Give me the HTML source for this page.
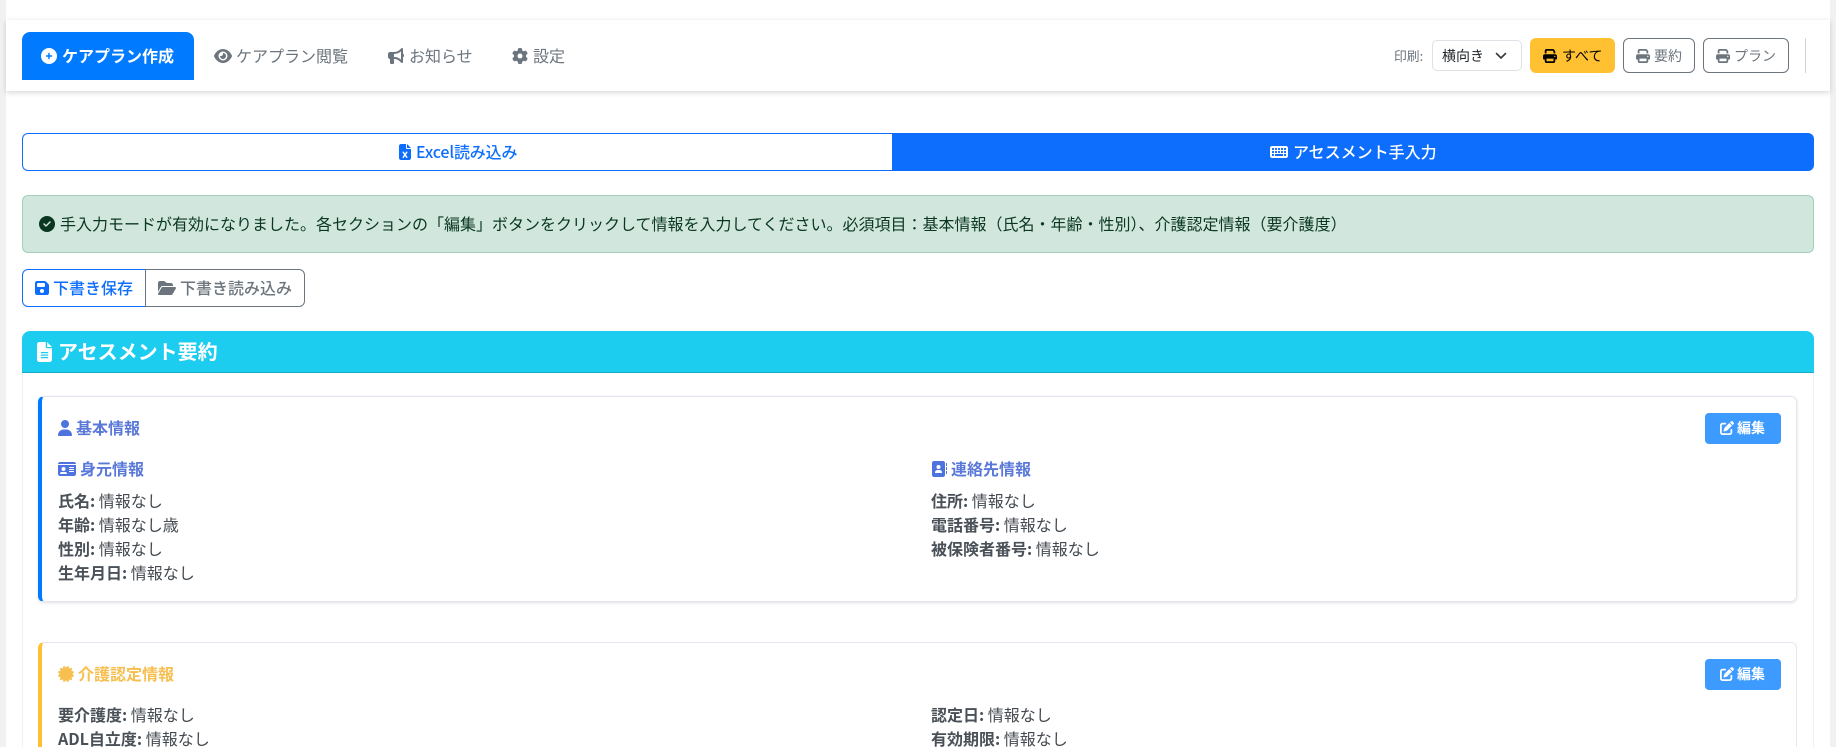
<!DOCTYPE html>
<html lang="ja"><head><meta charset="utf-8"><title>ケアプラン</title>
<style>
html,body{margin:0;padding:0;width:1836px;height:747px;overflow:hidden;background:#f0f1f3;}
body{font-family:"Noto Sans CJK JP","Liberation Sans",sans-serif;position:relative;color:#212529;}
#page{position:absolute;left:0;top:0;width:1836px;height:747px;overflow:hidden;}
#main{position:absolute;left:6px;top:0;width:1824px;height:747px;background:#fff;}
.a{position:absolute;box-sizing:border-box;}
.t{position:absolute;white-space:nowrap;line-height:24px;height:24px;font-size:16px;}
svg{position:absolute;fill:currentColor;display:block;}
b{font-weight:700;}
.row{color:#444a50;}
.row b{color:#495057;}
</style></head><body>
<svg width="0" height="0" style="position:absolute"><defs>
<symbol id="plus" viewBox="0 0 512 512"><path d="M256 512A256 256 0 1 0 256 0a256 256 0 1 0 0 512zM232 336V280H176c-13.3 0-24-10.7-24-24s10.7-24 24-24h56V176c0-13.3 10.7-24 24-24s24 10.7 24 24v56h56c13.3 0 24 10.7 24 24s-10.7 24-24 24H280v56c0 13.3-10.7 24-24 24s-24-10.7-24-24z"/></symbol>
<symbol id="eye" viewBox="0 0 576 512"><path d="M288 32c-80.8 0-145.5 36.8-192.6 80.6C48.6 156 17.3 208 2.5 243.7c-3.3 7.9-3.3 16.7 0 24.6C17.3 304 48.6 356 95.4 399.4C142.5 443.2 207.2 480 288 480s145.5-36.8 192.6-80.6c46.8-43.5 78.1-95.4 93-131.1c3.3-7.9 3.3-16.7 0-24.6c-14.9-35.7-46.2-87.7-93-131.1C433.5 68.8 368.8 32 288 32zM144 256a144 144 0 1 1 288 0 144 144 0 1 1 -288 0zm144-64c0 35.3-28.7 64-64 64c-7.1 0-13.9-1.2-20.3-3.3c-5.5-1.8-11.9 1.6-11.7 7.4c.3 6.9 1.3 13.8 3.2 20.7c13.7 51.2 66.4 81.6 117.6 67.9s81.6-66.4 67.9-117.6c-11.1-41.5-47.8-69.4-88.6-71.1c-5.8-.2-9.2 6.1-7.4 11.7c2.1 6.4 3.3 13.2 3.3 20.3z"/></symbol>
<symbol id="horn" viewBox="0 0 512 512"><path d="M480 32c0-12.9-7.8-24.6-19.8-29.6s-25.7-2.2-34.9 6.9L381.7 53c-48 48-113.1 75-181 75H192 160 64c-35.3 0-64 28.7-64 64v96c0 35.3 28.7 64 64 64l0 128c0 17.7 14.3 32 32 32h64c17.7 0 32-14.3 32-32V352l8.7 0c67.9 0 133 27 181 75l43.6 43.6c9.2 9.2 22.9 11.9 34.9 6.9s19.8-16.6 19.8-29.6V300.4c18.6-8.8 32-32.5 32-60.4s-13.4-51.6-32-60.4V32zm-64 76.7V240 371.3C357.2 317.8 280.5 288 200.7 288H192V192h8.7c79.8 0 156.5-29.8 215.3-83.3z"/></symbol>
<symbol id="cog" viewBox="0 0 512 512"><path d="M495.9 166.6c3.2 8.7 .5 18.4-6.4 24.6l-43.3 39.4c1.1 8.3 1.7 16.8 1.7 25.4s-.6 17.1-1.7 25.4l43.3 39.4c6.9 6.2 9.6 15.9 6.4 24.6c-4.4 11.9-9.7 23.3-15.8 34.3l-4.7 8.1c-6.6 11-14 21.4-22.1 31.2c-5.9 7.2-15.7 9.6-24.5 6.8l-55.7-17.7c-13.4 10.3-28.2 18.9-44 25.4l-12.5 57.1c-2 9.1-9 16.3-18.2 17.8c-13.8 2.3-28 3.5-42.5 3.5s-28.7-1.2-42.5-3.5c-9.2-1.5-16.2-8.7-18.2-17.8l-12.5-57.1c-15.8-6.5-30.6-15.1-44-25.4L83.1 425.9c-8.8 2.8-18.6 .3-24.5-6.8c-8.1-9.8-15.5-20.2-22.1-31.2l-4.7-8.1c-6.1-11-11.4-22.4-15.8-34.3c-3.2-8.7-.5-18.4 6.4-24.6l43.3-39.4C64.6 273.1 64 264.6 64 256s.6-17.1 1.7-25.4L22.4 191.2c-6.9-6.2-9.6-15.9-6.4-24.6c4.4-11.9 9.7-23.3 15.8-34.3l4.7-8.1c6.6-11 14-21.4 22.1-31.2c5.9-7.2 15.7-9.6 24.5-6.8l55.7 17.7c13.4-10.3 28.2-18.9 44-25.4l12.5-57.1c2-9.1 9-16.3 18.2-17.8C227.3 1.2 241.5 0 256 0s28.7 1.2 42.5 3.5c9.2 1.5 16.2 8.7 18.2 17.8l12.5 57.1c15.8 6.5 30.6 15.1 44 25.4l55.7-17.7c8.8-2.8 18.6-.3 24.5 6.8c8.1 9.8 15.5 20.2 22.1 31.2l4.7 8.1c6.1 11 11.4 22.4 15.8 34.3zM256 336a80 80 0 1 0 0-160 80 80 0 1 0 0 160z"/></symbol>
<symbol id="print" viewBox="0 0 512 512"><path d="M128 0C92.7 0 64 28.7 64 64v96h64V64H354.7L384 93.3V160h64V93.3c0-17-6.7-33.3-18.7-45.3L400 18.7C388 6.7 371.7 0 354.7 0H128zM384 352v32 64H128V384 368 352H384zm64 32h32c17.7 0 32-14.3 32-32V256c0-35.3-28.7-64-64-64H64c-35.3 0-64 28.7-64 64v96c0 17.7 14.3 32 32 32H64v64c0 35.3 28.7 64 64 64H384c35.3 0 64-28.7 64-64V384zM432 248a24 24 0 1 1 0 48 24 24 0 1 1 0-48z"/></symbol>
<symbol id="check" viewBox="0 0 512 512"><path d="M256 512A256 256 0 1 0 256 0a256 256 0 1 0 0 512zM369 209L241 337c-9.4 9.4-24.6 9.4-33.9 0l-64-64c-9.4-9.4-9.4-24.6 0-33.9s24.6-9.4 33.9 0l47 47L335 175c9.4-9.4 24.6-9.4 33.9 0s9.4 24.6 0 33.9z"/></symbol>
<symbol id="user" viewBox="0 0 448 512"><path d="M224 256A128 128 0 1 0 224 0a128 128 0 1 0 0 256zm-45.7 48C79.8 304 0 383.8 0 482.3C0 498.7 13.3 512 29.7 512H418.3c16.4 0 29.7-13.3 29.7-29.7C448 383.8 368.2 304 269.7 304H178.3z"/></symbol>
<symbol id="idcard" viewBox="0 0 576 512"><path d="M0 96l576 0c0-35.3-28.7-64-64-64H64C28.7 32 0 60.7 0 96zm0 32V416c0 35.3 28.7 64 64 64H512c35.3 0 64-28.7 64-64V128H0zM64 405.3c0-29.5 23.9-53.3 53.3-53.3H234.7c29.5 0 53.3 23.9 53.3 53.3c0 5.9-4.8 10.7-10.7 10.7H74.7c-5.9 0-10.7-4.8-10.7-10.7zM176 192a64 64 0 1 1 0 128 64 64 0 1 1 0-128zm176 16c0-8.8 7.2-16 16-16H496c8.8 0 16 7.2 16 16s-7.2 16-16 16H368c-8.8 0-16-7.2-16-16zm0 64c0-8.8 7.2-16 16-16H496c8.8 0 16 7.2 16 16s-7.2 16-16 16H368c-8.8 0-16-7.2-16-16zm0 64c0-8.8 7.2-16 16-16H496c8.8 0 16 7.2 16 16s-7.2 16-16 16H368c-8.8 0-16-7.2-16-16z"/></symbol>
<symbol id="book" viewBox="0 0 512 512"><path d="M96 0C60.7 0 32 28.7 32 64V448c0 35.3 28.7 64 64 64H384c35.3 0 64-28.7 64-64V64c0-35.3-28.7-64-64-64H96zM208 288h64c44.2 0 80 35.8 80 80c0 8.8-7.2 16-16 16H144c-8.8 0-16-7.2-16-16c0-44.2 35.8-80 80-80zm-32-96a64 64 0 1 1 128 0 64 64 0 1 1 -128 0zM512 80c0-8.8-7.2-16-16-16s-16 7.2-16 16v64c0 8.8 7.2 16 16 16s16-7.2 16-16V80zM496 192c-8.8 0-16 7.2-16 16v64c0 8.8 7.2 16 16 16s16-7.2 16-16V208c0-8.8-7.2-16-16-16zm16 144c0-8.8-7.2-16-16-16s-16 7.2-16 16v64c0 8.8 7.2 16 16 16s16-7.2 16-16V336z"/></symbol>
<symbol id="save" viewBox="0 0 448 512"><path d="M64 32C28.7 32 0 60.7 0 96V416c0 35.3 28.7 64 64 64H384c35.3 0 64-28.7 64-64V173.3c0-17-6.7-33.3-18.7-45.3L352 50.7C340 38.7 323.7 32 306.7 32H64zm0 96c0-17.7 14.3-32 32-32H288c17.7 0 32 14.3 32 32v64c0 17.7-14.3 32-32 32H96c-17.7 0-32-14.3-32-32V128zM224 288a64 64 0 1 1 0 128 64 64 0 1 1 0-128z"/></symbol>
<symbol id="folder" viewBox="0 0 576 512"><path d="M88.7 223.8L0 375.8V96C0 60.7 28.7 32 64 32H181.5c17 0 33.3 6.7 45.3 18.7l26.5 26.5c12 12 28.3 18.7 45.3 18.7H416c35.3 0 64 28.7 64 64v32H144c-22.8 0-43.8 12.1-55.3 31.8zm27.6 16.1C122.1 230 132.6 224 144 224H544c11.5 0 22 6.1 27.7 16.1s5.7 22.2-.1 32.1l-112 192C453.9 474 443.4 480 432 480H32c-11.5 0-22-6.1-27.7-16.1s-5.7-22.2 .1-32.1l112-192z"/></symbol>
<symbol id="filealt" viewBox="0 0 384 512"><path d="M64 0C28.7 0 0 28.7 0 64V448c0 35.3 28.7 64 64 64H320c35.3 0 64-28.7 64-64V160H256c-17.7 0-32-14.3-32-32V0H64zM256 0V128H384L256 0zM112 256H272c8.8 0 16 7.2 16 16s-7.2 16-16 16H112c-8.8 0-16-7.2-16-16s7.2-16 16-16zm0 64H272c8.8 0 16 7.2 16 16s-7.2 16-16 16H112c-8.8 0-16-7.2-16-16s7.2-16 16-16zm0 64H272c8.8 0 16 7.2 16 16s-7.2 16-16 16H112c-8.8 0-16-7.2-16-16s7.2-16 16-16z"/></symbol>
<symbol id="excel" viewBox="0 0 384 512"><path d="M64 0C28.7 0 0 28.7 0 64V448c0 35.3 28.7 64 64 64H320c35.3 0 64-28.7 64-64V160H256c-17.7 0-32-14.3-32-32V0H64zM256 0V128H384L256 0zM155.7 250.2L192 302.1l36.3-51.9c7.6-10.9 22.6-13.5 33.4-5.9s13.5 22.6 5.9 33.4L221.3 344l46.4 66.2c7.6 10.9 5 25.8-5.9 33.4s-25.8 5-33.4-5.9L192 385.8l-36.3 51.9c-7.6 10.9-22.6 13.5-33.4 5.9s-13.5-22.6-5.9-33.4L162.7 344l-46.4-66.2c-7.6-10.9-5-25.8 5.9-33.4s25.8-5 33.4 5.9z"/></symbol>
<symbol id="kbd" viewBox="0 0 576 512"><path d="M64 64C28.7 64 0 92.7 0 128V384c0 35.3 28.7 64 64 64H512c35.3 0 64-28.7 64-64V128c0-35.3-28.7-64-64-64H64zm16 64h32c8.8 0 16 7.2 16 16v32c0 8.8-7.2 16-16 16H80c-8.8 0-16-7.2-16-16V144c0-8.8 7.2-16 16-16zM64 240c0-8.8 7.2-16 16-16h32c8.8 0 16 7.2 16 16v32c0 8.8-7.2 16-16 16H80c-8.8 0-16-7.2-16-16V240zm16 80h32c8.8 0 16 7.2 16 16v32c0 8.8-7.2 16-16 16H80c-8.8 0-16-7.2-16-16V336c0-8.8 7.2-16 16-16zm80-176c0-8.8 7.2-16 16-16h32c8.8 0 16 7.2 16 16v32c0 8.8-7.2 16-16 16H176c-8.8 0-16-7.2-16-16V144zm16 80h32c8.8 0 16 7.2 16 16v32c0 8.8-7.2 16-16 16H176c-8.8 0-16-7.2-16-16V240c0-8.8 7.2-16 16-16zm80-80c0-8.8 7.2-16 16-16h32c8.8 0 16 7.2 16 16v32c0 8.8-7.2 16-16 16H272c-8.8 0-16-7.2-16-16V144zm16 80h32c8.8 0 16 7.2 16 16v32c0 8.8-7.2 16-16 16H272c-8.8 0-16-7.2-16-16V240c0-8.8 7.2-16 16-16zm80-80c0-8.8 7.2-16 16-16h32c8.8 0 16 7.2 16 16v32c0 8.8-7.2 16-16 16H368c-8.8 0-16-7.2-16-16V144zm16 80h32c8.8 0 16 7.2 16 16v32c0 8.8-7.2 16-16 16H368c-8.8 0-16-7.2-16-16V240c0-8.8 7.2-16 16-16zm80-80c0-8.8 7.2-16 16-16h32c8.8 0 16 7.2 16 16v32c0 8.8-7.2 16-16 16H464c-8.8 0-16-7.2-16-16V144zm16 80h32c8.8 0 16 7.2 16 16v32c0 8.8-7.2 16-16 16H464c-8.8 0-16-7.2-16-16V240c0-8.8 7.2-16 16-16zM176 320H400c8.8 0 16 7.2 16 16v32c0 8.8-7.2 16-16 16H176c-8.8 0-16-7.2-16-16V336c0-8.8 7.2-16 16-16zm272 16c0-8.8 7.2-16 16-16h32c8.8 0 16 7.2 16 16v32c0 8.8-7.2 16-16 16h-32c-8.8 0-16-7.2-16-16V336z"/></symbol>
<symbol id="edit" viewBox="0 0 512 512"><path d="M471.6 21.7c-21.9-21.9-57.3-21.9-79.2 0L362.3 51.7l97.9 97.9 30.1-30.1c21.9-21.9 21.9-57.3 0-79.2L471.6 21.7zm-299.2 220c-6.1 6.1-10.8 13.6-13.5 21.9l-29.6 88.8c-2.9 8.6-.6 18.1 5.8 24.6s15.9 8.7 24.6 5.8l88.8-29.6c8.2-2.7 15.7-7.4 21.9-13.5L437.7 172.3 339.7 74.3 172.4 241.7zM96 64C43 64 0 107 0 160V416c0 53 43 96 96 96H352c53 0 96-43 96-96V320c0-17.7-14.3-32-32-32s-32 14.3-32 32v96c0 17.7-14.3 32-32 32H96c-17.7 0-32-14.3-32-32V160c0-17.7 14.3-32 32-32h96c17.7 0 32-14.3 32-32s-14.3-32-32-32H96z"/></symbol>
<symbol id="cert" viewBox="0 0 512 512"><path d="M211 7.3C205 1 196-1.4 187.6 .8s-14.9 8.9-17.1 17.3L154.7 80.6l-62-17.5c-8.4-2.4-17.4 0-23.5 6.1s-8.5 15.1-6.1 23.5l17.5 62L18.1 170.6c-8.4 2.1-15 8.7-17.3 17.1S1 205 7.3 211l46.2 45L7.3 301C1 307-1.4 316 .8 324.4s8.9 14.9 17.3 17.1l62.5 15.8-17.5 62c-2.4 8.4 0 17.4 6.1 23.5s15.1 8.5 23.5 6.1l62-17.5 15.8 62.5c2.1 8.4 8.7 15 17.1 17.3s17.3-.2 23.4-6.4l45-46.2 45 46.2c6.1 6.2 15 8.7 23.4 6.4s14.9-8.9 17.1-17.3l15.8-62.5 62 17.5c8.4 2.4 17.4 0 23.5-6.1s8.5-15.1 6.1-23.5l-17.5-62 62.5-15.8c8.4-2.1 15-8.7 17.3-17.1s-.2-17.3-6.4-23.4l-46.2-45 46.2-45c6.2-6.1 8.7-15 6.4-23.4s-8.9-14.9-17.3-17.1l-62.5-15.8 17.5-62c2.4-8.4 0-17.4-6.1-23.5s-15.1-8.5-23.5-6.1l-62 17.5L341.4 18.1c-2.1-8.4-8.7-15-17.1-17.3S307 1 301 7.3L256 53.5 211 7.3z"/></symbol>
</defs></svg>

<div id="page">
<div id="main"></div>

<!-- nav -->
<div class="a" style="left:6px;top:20px;width:1824px;height:71px;background:#fff;box-shadow:0 -1px 4px rgba(0,0,0,.03),0 2px 5px rgba(0,0,0,.14);"></div>
<div class="a" style="left:22px;top:32px;width:172px;height:48px;background:#007bff;border-radius:8px 8px 0 0;"></div>
<svg style="left:41px;top:48px;color:#fff" width="16" height="16"><use href="#plus"/></svg>
<span class="t" style="left:62px;top:43px;color:#fff;font-weight:700;">ケアプラン作成</span>
<svg style="left:214px;top:48px;color:#6c757d" width="18" height="16"><use href="#eye"/></svg>
<span class="t" style="left:236px;top:43px;color:#6c757d;">ケアプラン閲覧</span>
<svg style="left:388px;top:48px;color:#6c757d" width="16" height="16"><use href="#horn"/></svg>
<span class="t" style="left:409px;top:43px;color:#6c757d;">お知らせ</span>
<svg style="left:512px;top:48px;color:#6c757d" width="16" height="16"><use href="#cog"/></svg>
<span class="t" style="left:533px;top:43px;color:#6c757d;">設定</span>

<span class="t" style="left:1394px;top:44px;color:#6c757d;font-size:12.8px;">印刷:</span>
<div class="a" style="left:1432px;top:40px;width:90px;height:31px;background:#fff;border:1px solid #dee2e6;border-radius:5px;"></div>
<span class="t" style="left:1442px;top:44px;font-size:14px;color:#212529;">横向き</span>
<svg style="left:1495px;top:52px;fill:none;stroke:#343a40;stroke-width:1.6;stroke-linecap:round;stroke-linejoin:round" width="12" height="8" viewBox="0 0 12 8"><path d="M1.5 1.5L6 6l4.5-4.5"/></svg>
<div class="a" style="left:1530px;top:38px;width:85px;height:35px;background:#ffc031;border-radius:6px;"></div>
<svg style="left:1543px;top:49px;color:#000" width="14" height="14"><use href="#print"/></svg>
<span class="t" style="left:1562px;top:44px;font-size:14px;color:#000;">すべて</span>
<div class="a" style="left:1623px;top:38px;width:72px;height:35px;border:1px solid #6c757d;border-radius:6px;"></div>
<svg style="left:1636px;top:49px;color:#6c757d" width="14" height="14"><use href="#print"/></svg>
<span class="t" style="left:1654px;top:44px;font-size:14px;color:#6c757d;">要約</span>
<div class="a" style="left:1703px;top:38px;width:86px;height:35px;border:1px solid #6c757d;border-radius:6px;"></div>
<svg style="left:1716px;top:49px;color:#6c757d" width="14" height="14"><use href="#print"/></svg>
<span class="t" style="left:1734px;top:44px;font-size:14px;color:#6c757d;">プラン</span>
<div class="a" style="left:1805px;top:38px;width:1px;height:35px;background:#ced4da;"></div>

<!-- tabs -->
<div class="a" style="left:22px;top:133px;width:871px;height:38px;border:1px solid #0d6efd;border-right:0;border-radius:6px 0 0 6px;background:#fff;"></div>
<div class="a" style="left:892px;top:133px;width:922px;height:38px;background:#0d6efd;border-radius:0 6px 6px 0;"></div>
<svg style="left:399px;top:144px;color:#0d6efd" width="12" height="16"><use href="#excel"/></svg>
<span class="t" style="left:416px;top:139px;font-size:16px;color:#0d6efd;font-weight:500;letter-spacing:-.15px;">Excel読み込み</span>
<svg style="left:1270px;top:144px;color:#fff" width="18" height="16"><use href="#kbd"/></svg>
<span class="t" style="left:1293px;top:139px;font-size:16px;color:#fff;font-weight:500;">アセスメント手入力</span>

<!-- alert -->
<div class="a" style="left:22px;top:195px;width:1792px;height:58px;background:#d1e7dd;border:1px solid #a3cfbb;border-radius:6px;"></div>
<svg style="left:39px;top:216px;color:#0a3622" width="16" height="16"><use href="#check"/></svg>
<span class="t" style="left:60px;top:211px;font-size:16px;color:#0a3622;">手入力モードが有効になりました。各セクションの「編集」ボタンをクリックして情報を入力してください。必須項目：基本情報（氏名・年齢・性別）、介護認定情報（要介護度）</span>

<!-- draft -->
<div class="a" style="left:22px;top:269px;width:124px;height:38px;border:1px solid #0d6efd;border-radius:6px 0 0 6px;"></div>
<div class="a" style="left:145px;top:269px;width:160px;height:38px;border:1px solid #6c757d;border-radius:0 6px 6px 0;"></div>
<svg style="left:35px;top:280px;color:#0d6efd" width="14" height="16"><use href="#save"/></svg>
<span class="t" style="left:53px;top:275px;color:#0d6efd;font-weight:500;">下書き保存</span>
<svg style="left:158px;top:280px;color:#6c757d" width="18" height="16"><use href="#folder"/></svg>
<span class="t" style="left:180px;top:275px;color:#6c757d;font-weight:500;">下書き読み込み</span>

<!-- panel -->
<div class="a" style="left:22px;top:331px;width:1792px;height:416px;background:#fff;border:1px solid #eef0f2;border-bottom:0;border-radius:8px 8px 0 0;"></div>
<div class="a" style="left:22px;top:331px;width:1792px;height:42px;background:#1dcdf0;border-bottom:1px solid #1aa9c6;border-radius:8px 8px 0 0;"></div>
<svg style="left:37px;top:342px;color:#fff" width="15" height="20"><use href="#filealt"/></svg>
<span class="t" style="left:58px;top:339px;font-size:20px;color:#fff;font-weight:700;">アセスメント要約</span>

<!-- card 1 -->
<div class="a" style="left:38px;top:396px;width:1759px;height:206px;background:#fff;border:1px solid #e3e6f0;border-left:4px solid #007bff;border-radius:6px;box-shadow:0 1px 3px rgba(0,0,0,.12);"></div>
<svg style="left:58px;top:420px;color:#4e73df" width="14" height="16"><use href="#user"/></svg>
<span class="t" style="left:76px;top:415px;color:#5a78d8;font-weight:700;">基本情報</span>
<div class="a" style="left:1705px;top:413px;width:76px;height:31px;background:#3d9bff;border-radius:4px;"></div>
<svg style="left:1720px;top:421px;color:#fff" width="14" height="14"><use href="#edit"/></svg>
<span class="t" style="left:1737px;top:416px;font-size:14px;color:#fff;font-weight:700;">編集</span>

<svg style="left:58px;top:461px;color:#4e73df" width="18" height="16"><use href="#idcard"/></svg>
<span class="t" style="left:80px;top:456px;color:#5a78d8;font-weight:700;">身元情報</span>
<span class="t row" style="left:58px;top:488px;"><b>氏名:</b> 情報なし</span>
<span class="t row" style="left:58px;top:512px;"><b>年齢:</b> 情報なし歳</span>
<span class="t row" style="left:58px;top:536px;"><b>性別:</b> 情報なし</span>
<span class="t row" style="left:58px;top:560px;"><b>生年月日:</b> 情報なし</span>

<svg style="left:931px;top:461px;color:#4e73df" width="16" height="16"><use href="#book"/></svg>
<span class="t" style="left:951px;top:456px;color:#5a78d8;font-weight:700;">連絡先情報</span>
<span class="t row" style="left:931px;top:488px;"><b>住所:</b> 情報なし</span>
<span class="t row" style="left:931px;top:512px;"><b>電話番号:</b> 情報なし</span>
<span class="t row" style="left:931px;top:536px;"><b>被保険者番号:</b> 情報なし</span>

<!-- card 2 -->
<div class="a" style="left:38px;top:642px;width:1759px;height:105px;background:#fff;border:1px solid #e3e6f0;border-bottom:0;border-left:4px solid #ffc031;border-radius:6px 6px 0 0;"></div>
<svg style="left:58px;top:666px;color:#f6bf4f" width="16" height="16"><use href="#cert"/></svg>
<span class="t" style="left:78px;top:661px;color:#f6bf4f;font-weight:700;">介護認定情報</span>
<div class="a" style="left:1705px;top:659px;width:76px;height:31px;background:#3d9bff;border-radius:4px;"></div>
<svg style="left:1720px;top:667px;color:#fff" width="14" height="14"><use href="#edit"/></svg>
<span class="t" style="left:1737px;top:662px;font-size:14px;color:#fff;font-weight:700;">編集</span>
<span class="t row" style="left:58px;top:702px;"><b>要介護度:</b> 情報なし</span>
<span class="t row" style="left:58px;top:726px;height:21px;overflow:hidden;"><b>ADL自立度:</b> 情報なし</span>
<span class="t row" style="left:931px;top:702px;"><b>認定日:</b> 情報なし</span>
<span class="t row" style="left:931px;top:726px;height:21px;overflow:hidden;"><b>有効期限:</b> 情報なし</span>
</div>
</body></html>
